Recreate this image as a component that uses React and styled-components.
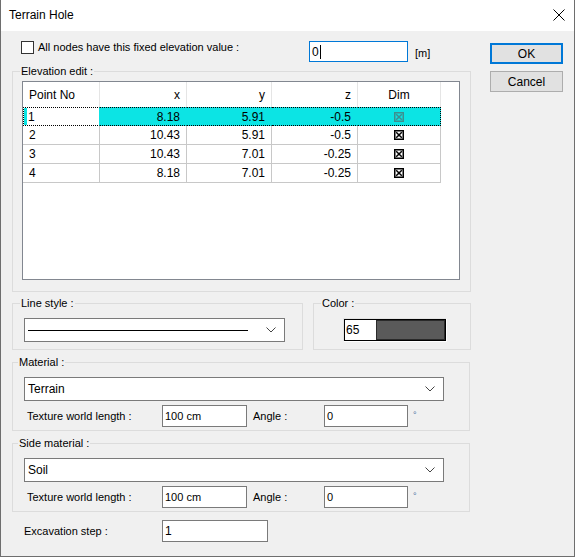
import React from 'react';
import styled, { createGlobalStyle } from 'styled-components';

const GlobalStyle = createGlobalStyle`
  html, body {
    margin: 0;
    padding: 0;
    background: #ffffff;
  }
  body {
    font-family: "Liberation Sans", Arial, sans-serif;
    font-size: 11px;
    color: #000;
  }
  * { box-sizing: border-box; }
`

const Window = styled.div`
  width: 575px;
  height: 557px;
  border: 1px solid #6e6e6e;
  border-top: none;
  display: flex;
  flex-direction: column;
  background: #f0f0f0;
`

const TitleBar = styled.div`
  height: 31px;
  background: #ffffff;
  display: flex;
  align-items: center;
  justify-content: space-between;
  padding: 0 9px 1px 8px;
  font-size: 12px;
`

const Body = styled.div`
  flex: 1;
  display: flex;
  padding: 10px 0 0 11px;
`

const Main = styled.div`
  width: 459px;
  display: flex;
  flex-direction: column;
`

const Side = styled.div`
  margin-left: 19px;
  padding-top: 2px;
  display: flex;
  flex-direction: column;
  gap: 7px;
`

const Button = styled.div`
  width: 73px;
  height: 21px;
  display: flex;
  align-items: center;
  justify-content: center;
  background: #e1e1e1;
  border: ${p => p.$default ? '2px solid #0078d7' : '1px solid #adadad'};
  font-size: 12px;
`

const TopRow = styled.div`
  display: flex;
  align-items: center;
  height: 21px;
`

const CheckLabel = styled.label`
  width: 297px;
  display: flex;
  align-items: center;
  padding-left: 9px;
  gap: 4px;
`

const CheckBox = styled.span`
  width: 13px;
  height: 13px;
  border: 1px solid #333;
  background: #fff;
  margin-top: -9px;
`

const CheckText = styled.span`
  margin-top: -10px;
`

const Field = styled.div`
  width: ${p => p.$w}px;
  height: ${p => p.$h || 22}px;
  border: 1px solid ${p => p.$focus ? '#0078d7' : '#7a7a7a'};
  background: #fff;
  display: flex;
  align-items: center;
  padding-left: 2px;
  font-size: ${p => p.$fs || 11}px;
`

const Caret = styled.span`
  width: 1px;
  height: 14px;
  background: #000;
  margin-left: 1px;
`

const Unit = styled.span`
  margin-left: 7px;
  margin-top: 2px;
`

/* group box: the legend sits on the top border line */
const Group = styled.div`
  border: 1px solid #dcdcdc;
  width: ${p => p.$w ? p.$w + 'px' : 'auto'};
  margin-top: ${p => p.$mt || 0}px;
  padding: 0 ${p => p.$pr || 0}px ${p => p.$pb || 0}px ${p => p.$pl || 0}px;
  display: flex;
  flex-direction: column;
`

const Legend = styled.div`
  align-self: flex-start;
  height: 14px;
  line-height: 14px;
  margin: -8px 0 0 ${p => p.$ml ?? 7}px;
  padding: 0 1px;
  background: #f0f0f0;
`

const ListBox = styled.div`
  margin-top: 3px;
  height: 199px;
  border: 1px solid #828790;
  background: #fff;
`

const Table = styled.div`
  width: 418px;
  display: grid;
  grid-template-columns: 77px 87px 85px 86px 83px;
`

const HeadCell = styled.div`
  height: 25px;
  display: flex;
  align-items: center;
  justify-content: ${p => p.$align || 'flex-end'};
  padding: 0 6px;
  border-right: 1px solid #e5e5e5;
  font-size: 12px;
`

const Cell = styled.div`
  height: 19px;
  display: flex;
  align-items: center;
  justify-content: ${p => p.$align || 'flex-end'};
  padding: 0 6px 0 ${p => p.$pl ?? 6}px;
  border-right: 1px solid #c8c8c8;
  border-bottom: 1px solid #c8c8c8;
  background: #fff;
  font-size: 12px;
`

const SelCell = styled(Cell)`
  border-top: 1px dotted #000;
  border-bottom: 1px dotted #000;
  border-right: ${p => p.$last ? '1px dotted #000' : '1px solid #0ce4e4'};
  border-left: ${p => p.$first ? '1px dotted #000' : 'none'};
  box-shadow: ${p => p.$first ? 'inset 3px 0 0 #0ce4e4' : 'none'};
  background: ${p => p.$first ? '#fff' : '#0ce4e4'};
`

const Row = styled.div`
  display: flex;
  gap: ${p => p.$gap || 0}px;
  margin-top: ${p => p.$mt || 0}px;
`

const Combo = styled.div`
  margin-top: 8px;
  width: ${p => p.$w}px;
  height: 24px;
  border: 1px solid #7a7a7a;
  background: #fff;
  display: flex;
  align-items: center;
  padding: 0 8px 0 3px;
  font-size: 12px;
`

const ComboValue = styled.div`
  flex: 1;
`

const LinePreview = styled.div`
  flex: 1;
  height: 1px;
  background: #000;
  margin-right: 18px;
`

const ColorBox = styled.div`
  margin: 8px 0 0 29px;
  width: 104px;
  height: 24px;
  border: 1px solid #fff;
  border-top-color: #e3e3e3;
  border-left-color: #e3e3e3;
  display: flex;
`

const ColorInner = styled.div`
  flex: 1;
  display: flex;
  border: 1px solid #000;
  background: #fff;
`

const ColorValue = styled.div`
  width: 31px;
  display: flex;
  align-items: center;
  padding-left: 1px;
  font-size: 12px;
`

const Swatch = styled.div`
  flex: 1;
  background: #5a5a5a;
  border: 1px solid #2a2a2a;
`

const FieldLabel = styled.div`
  width: ${p => p.$w}px;
  padding-left: ${p => p.$pl || 0}px;
  display: flex;
  align-items: center;
`

const Degree = styled.span`
  margin: 5px 0 0 5px;
  font-size: 9px;
  color: #4a6fa0;
  align-self: flex-start;
`

const Chevron = () => (
  <svg width="10" height="6" viewBox="0 0 10 6">
    <path d="M0.5 0.5 L5 5 L9.5 0.5" fill="none" stroke="#444" strokeWidth="1" />
  </svg>
)

const Close = () => (
  <svg width="12" height="12" viewBox="0 0 12 12">
    <path d="M0.5 0.5 L11.5 11.5 M11.5 0.5 L0.5 11.5" stroke="#000" strokeWidth="1" />
  </svg>
)

const DimBox = ({ color }) => (
  <svg width="10" height="10" viewBox="0 0 10 10">
    <rect x="0.75" y="0.75" width="8.5" height="8.5" fill="none" stroke={color} strokeWidth="1.5" />
    <path d="M2.2 2.2 L7.8 7.8 M7.8 2.2 L2.2 7.8" stroke={color} strokeWidth="1.5" />
  </svg>
)

const rows = [
  ['1', '8.18', '5.91', '-0.5'],
  ['2', '10.43', '5.91', '-0.5'],
  ['3', '10.43', '7.01', '-0.25'],
  ['4', '8.18', '7.01', '-0.25'],
]

const TextureRow = () => (
  <Row $mt={4}>
    <FieldLabel $w={138} $pl={3}>Texture world length :</FieldLabel>
    <Field $w={85}>100 cm</Field>
    <FieldLabel $w={77} $pl={6}>Angle :</FieldLabel>
    <Field $w={84}>0</Field>
    <Degree>°</Degree>
  </Row>
)

function App() {
  return (
    <>
      <GlobalStyle />
      <Window>
        <TitleBar>
          <span>Terrain Hole</span>
          <Close />
        </TitleBar>
        <Body>
          <Main>
            <TopRow>
              <CheckLabel>
                <CheckBox />
                <CheckText>All nodes have this fixed elevation value :</CheckText>
              </CheckLabel>
              <Field $w={99} $h={21} $fs={12} $focus>0<Caret /></Field>
              <Unit>[m]</Unit>
            </TopRow>

            <Group $mt={9} $pl={9} $pr={10} $pb={11}>
              <Legend $ml={-2}>Elevation edit :</Legend>
              <ListBox>
                <Table>
                  <HeadCell $align="flex-start">Point No</HeadCell>
                  <HeadCell>x</HeadCell>
                  <HeadCell>y</HeadCell>
                  <HeadCell>z</HeadCell>
                  <HeadCell $align="center">Dim</HeadCell>
                  {rows.map((r, i) => {
                    const C = i === 0 ? SelCell : Cell
                    return (
                      <React.Fragment key={r[0]}>
                        <C $align="flex-start" $pl={i === 0 ? 4 : 6} $first>{r[0]}</C>
                        <C>{r[1]}</C>
                        <C>{r[2]}</C>
                        <C>{r[3]}</C>
                        <C $align="center" $last>
                          <DimBox color={i === 0 ? '#3d8f8f' : '#000'} />
                        </C>
                      </React.Fragment>
                    )
                  })}
                </Table>
              </ListBox>
            </Group>

            <Row $mt={11} $gap={10}>
              <Group $w={291} $pl={11} $pb={7}>
                <Legend $ml={-4}>Line style :</Legend>
                <Combo $w={261}>
                  <LinePreview />
                  <Chevron />
                </Combo>
              </Group>
              <Group $w={158} $pb={7}>
                <Legend>Color :</Legend>
                <ColorBox>
                  <ColorInner>
                    <ColorValue>65</ColorValue>
                    <Swatch />
                  </ColorInner>
                </ColorBox>
              </Group>
            </Row>

            <Group $mt={12} $pl={11} $pb={3} $w={458}>
              <Legend $ml={-6}>Material :</Legend>
              <Combo $w={420}>
                <ComboValue>Terrain</ComboValue>
                <Chevron />
              </Combo>
              <TextureRow />
            </Group>

            <Group $mt={12} $pl={11} $pb={3} $w={458}>
              <Legend $ml={-6}>Side material :</Legend>
              <Combo $w={420}>
                <ComboValue>Soil</ComboValue>
                <Chevron />
              </Combo>
              <TextureRow />
            </Group>

            <Row $mt={8}>
              <FieldLabel $w={150} $pl={12}>Excavation step :</FieldLabel>
              <Field $w={106} $fs={12}>1</Field>
            </Row>
          </Main>
          <Side>
            <Button $default>OK</Button>
            <Button>Cancel</Button>
          </Side>
        </Body>
      </Window>
    </>
  )
}

export default App;
